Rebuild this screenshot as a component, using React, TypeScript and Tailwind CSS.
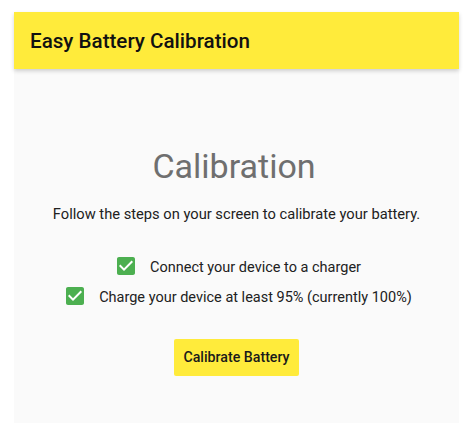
import React from "react";

function CheckBox() {
  return (
    <svg width="24" height="24" viewBox="0 0 24 24" className="shrink-0">
      <rect x="3" y="3" width="18" height="18" rx="2" fill="#ffffff" />
      <path
        fill="#4caf50"
        d="M19 3H5c-1.11 0-2 .9-2 2v14c0 1.1.89 2 2 2h14c1.11 0 2-.9 2-2V5c0-1.1-.89-2-2-2zm-9 14l-5-5 1.41-1.41L10 14.17l7.59-7.59L19 8l-9 9z"
      />
    </svg>
  );
}

export default function App() {
  return (
    <div
      className="min-h-[438px] bg-white pt-[12px] pl-[14px]"
      style={{ fontFamily: "Roboto, 'Liberation Sans', Arial, sans-serif" }}
    >
      <div className="w-[445px] h-[411px] bg-[#fafafa] flex flex-col">
        <header className="h-[57px] bg-[#ffeb3b] flex items-center pl-[16px] shadow-[0_2px_4px_rgba(0,0,0,0.18)] relative z-10">
          <h1 className="text-[20.6px] leading-[28px] font-medium text-[#111111]">
            Easy Battery Calibration
          </h1>
        </header>
        <main className="flex flex-col items-center pt-[77px]">
          <h2 className="text-[34px] leading-[40px] font-normal text-[#6f6f6f] pr-[5px]">
            Calibration
          </h2>
          <p className="mt-[18px] text-[14.7px] leading-[20px] text-[#212121]">
            Follow the steps on your screen to calibrate your battery.
          </p>
          <div className="mt-[30px] flex flex-col items-center pl-[2px]">
            <div className="h-[30px] flex items-start gap-[12px]">
              <CheckBox />
              <span className="mt-[4px] text-[14.5px] leading-[20px] text-[#212121]">
                Connect your device to a charger
              </span>
            </div>
            <div className="h-[30px] flex items-start gap-[12px]">
              <CheckBox />
              <span className="mt-[4px] text-[14.5px] leading-[20px] text-[#212121]">
                Charge your device at least 95% (currently 100%)
              </span>
            </div>
          </div>
          <button className="mt-[25px] h-[37px] px-[9px] bg-[#ffeb3b] rounded-[2px] text-[14.2px] font-medium text-[#1a1a1a]">
            Calibrate Battery
          </button>
        </main>
      </div>
    </div>
  );
}
